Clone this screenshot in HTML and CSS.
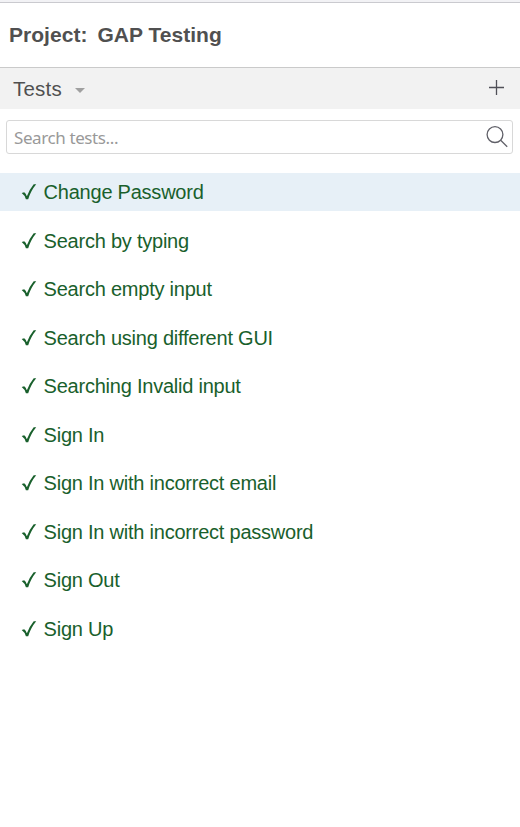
FILE: index.html
```html
<!DOCTYPE html>
<html lang="en">
<head>
<meta charset="utf-8">
<title>GAP Testing</title>
<link rel="stylesheet" href="styles.css">
</head>
<body>
<svg class="defs" width="0" height="0"><symbol id="check" viewBox="0 0 16 18"><path d="M.7 10 3.2 9.3Q4.9 10.7 5.7 12.9L6 12.9Q8.5 6.5 12.7 1.3L15.2 1.3Q9.8 7.8 7.2 16.2L4.9 16.2Q3.6 12 .7 10Z"/></symbol></svg>
<header class="project"><span>Project:</span><span>GAP Testing</span></header>
<div class="toolbar">
  <span class="toolbar-title">Tests</span>
  <span class="caret"></span>
  <svg class="plus" width="17" height="17" viewBox="0 0 17 17"><path d="M1 8.5H16M8.5 1V16"/></svg>
</div>
<div class="search">
  <input type="text" placeholder="Search tests..." aria-label="Search tests">
  <svg class="lens" width="24" height="24" viewBox="0 0 24 24"><circle cx="10" cy="9.6" r="7.9"/><path d="M15.7 15.2 22.2 21.7"/></svg>
</div>
<ul class="tests">
  <li class="selected"><svg class="check"><use href="#check"/></svg><span>Change Password</span></li>
  <li><svg class="check"><use href="#check"/></svg><span>Search by typing</span></li>
  <li><svg class="check"><use href="#check"/></svg><span>Search empty input</span></li>
  <li><svg class="check"><use href="#check"/></svg><span>Search using different GUI</span></li>
  <li><svg class="check"><use href="#check"/></svg><span>Searching Invalid input</span></li>
  <li><svg class="check"><use href="#check"/></svg><span>Sign In</span></li>
  <li><svg class="check"><use href="#check"/></svg><span>Sign In with incorrect email</span></li>
  <li><svg class="check"><use href="#check"/></svg><span>Sign In with incorrect password</span></li>
  <li><svg class="check"><use href="#check"/></svg><span>Sign Out</span></li>
  <li><svg class="check"><use href="#check"/></svg><span>Sign Up</span></li>
</ul>
</body>
</html>
```
FILE: styles.css
```css
* { box-sizing: border-box; }
body {
  margin: 0;
  height: 827px;
  overflow: hidden;
  display: flex;
  flex-direction: column;
  background: #fff;
  border-top: 2px solid #f2f2f5;
  font-family: "Liberation Sans", Arial, sans-serif;
  color: #505050;
}
.defs { display: none; }
.project {
  height: 66px;
  flex: none;
  display: flex;
  align-items: center;
  gap: 10px;
  padding-left: 9px;
  border-top: 1px solid #cacacf;
  border-bottom: 1px solid #cacaca;
  font-size: 21px;
  font-weight: bold;
  letter-spacing: 0.03px;
}
.toolbar {
  height: 41px;
  flex: none;
  display: flex;
  align-items: center;
  padding: 0 15px 0 13px;
  background: #f2f2f2;
}
.toolbar-title { font-size: 20.5px; line-height: 24px; letter-spacing: 0.2px; }
.caret {
  margin: 4px 0 0 13px;
  border: 5px solid transparent;
  border-top-color: #a0a0a0;
  border-bottom: 0;
}
.plus { margin: -3px 0 0 auto; fill: none; stroke: #505058; stroke-width: 1.3; }
.search {
  height: 34px;
  flex: none;
  margin: 11px 7px 0 6px;
  display: flex;
  align-items: center;
  padding: 0 3px 0 7px;
  border: 1px solid #d8d8d8;
  border-radius: 3px;
}
.search input {
  flex: 1;
  min-width: 0;
  padding: 0;
  border: 0;
  outline: 0;
  background: none;
  font: 17px "Noto Sans", sans-serif;
  letter-spacing: -0.4px;
}
.search input::placeholder { color: #999; }
.lens { fill: none; stroke: #606068; stroke-width: 1.3; }
.tests {
  list-style: none;
  margin: 19px 0 0;
  padding: 0;
  display: flex;
  flex-direction: column;
  gap: 10.53px;
}
.tests li {
  height: 38px;
  display: flex;
  align-items: center;
  gap: 6.6px;
  padding-left: 21px;
  font-size: 20px;
  line-height: 24px;
  letter-spacing: -0.23px;
  color: #19602c;
}
.tests .selected { background: #e7f0f7; }
.check { width: 16px; height: 18px; fill: #19602c; }
```
